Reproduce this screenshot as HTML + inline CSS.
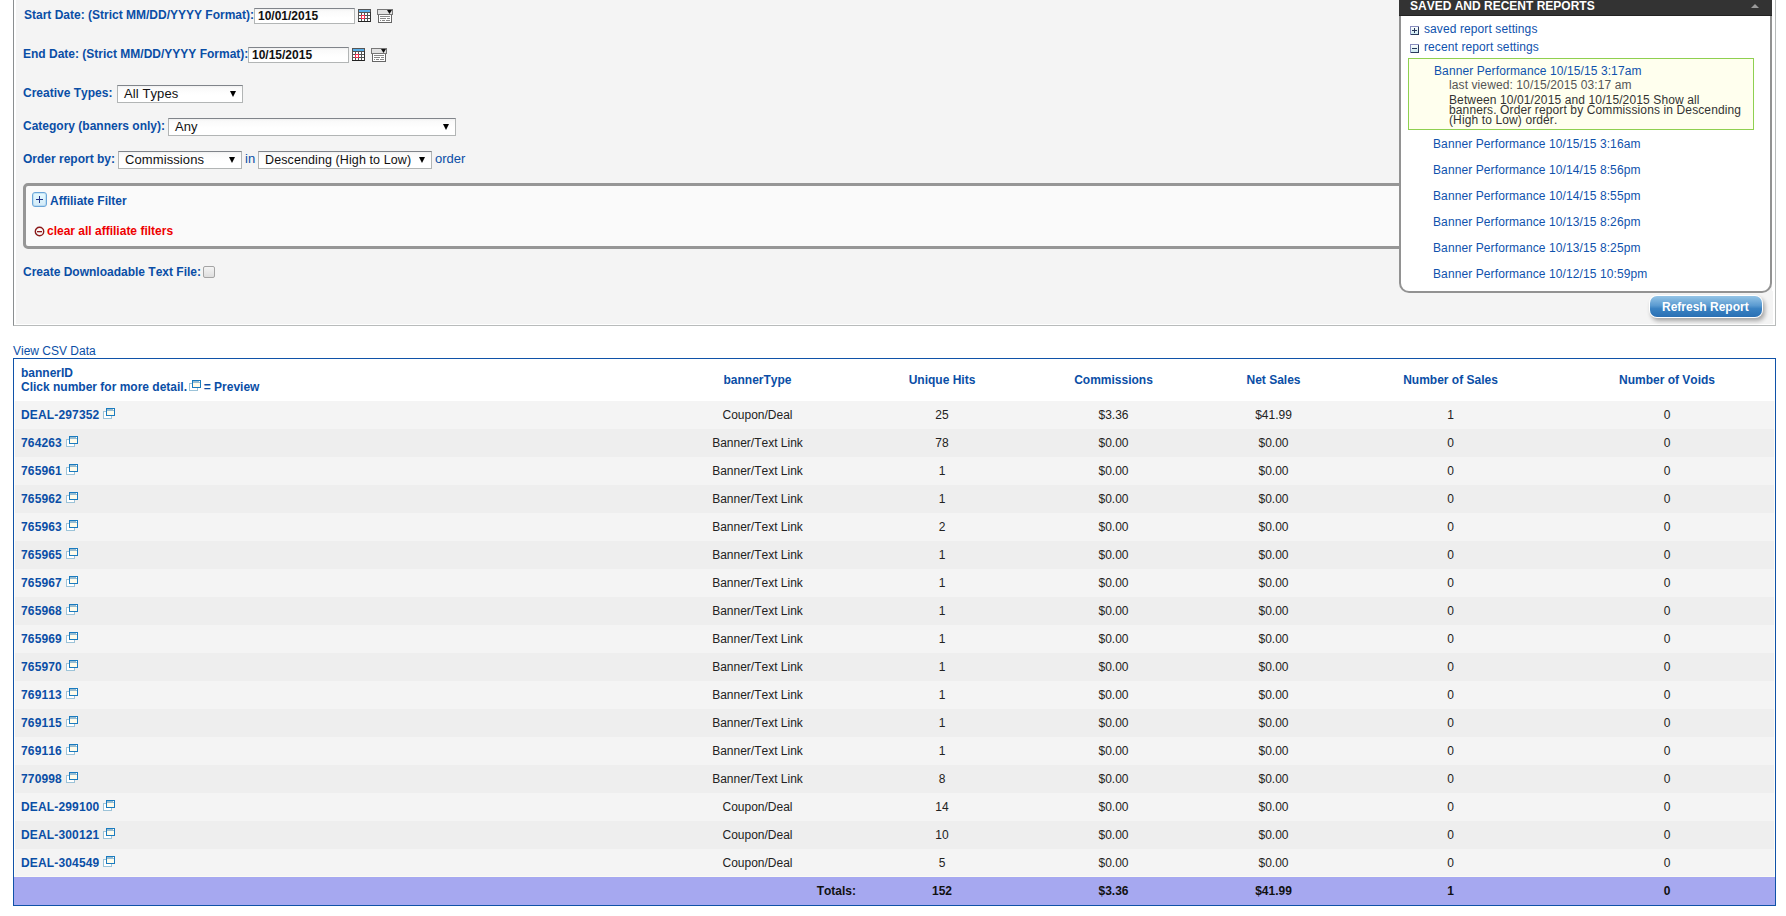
<!DOCTYPE html>
<html><head><meta charset="utf-8">
<style>
*{margin:0;padding:0;box-sizing:border-box}
html,body{width:1786px;height:916px;overflow:hidden;background:#fff}
body{position:relative;font-family:"Liberation Sans",sans-serif;font-size:12px;color:#222;font-kerning:none;font-feature-settings:"kern" 0}
.a{position:absolute;white-space:nowrap;line-height:14px}
.lbl{font-weight:bold;color:#0a4ea6}
#form{position:absolute;left:13px;top:-20px;width:1763px;height:346px;background:#f4f4f4;border:1px solid #b8bbbb;border-left-color:#8b8f91;box-shadow:inset 2px 0 0 #fff,inset -2px 0 0 #fff,inset 0 -1px 0 #fff}
.inp{position:absolute;background:linear-gradient(#f0f0f0,#fafafa 2px,#fff 9px);border:1px solid #b2b5b5;border-top-color:#80848a;font-size:12px;font-weight:bold;color:#111;line-height:14px;padding-left:3px}
.sel{position:absolute;letter-spacing:0.1px;background:linear-gradient(#f0f0f0,#fafafa 2px,#fff 9px);border:1px solid #b2b5b5;border-top-color:#80848a;font-size:13px;color:#111;line-height:16px;padding-left:6px}
.sel .arr{position:absolute;right:6px;top:5px;width:0;height:0;border-left:3px solid transparent;border-right:3px solid transparent;border-top:6px solid #000}
#aff{position:absolute;left:23px;top:183px;width:1420px;height:66px;border:3px solid #969696;border-radius:5px;background:#fafafa}
#panel{position:absolute;left:1399px;top:-20px;width:373px;height:313px;background:#fff;border:2px solid #929292;border-top:0;border-radius:0 0 10px 10px}
#phead{position:absolute;left:1399px;top:0;width:373px;height:16px;background:#333;border-bottom:1px solid #222}
.plink{color:#0f52ad;letter-spacing:0.1px}
table{position:absolute;left:13px;top:358px;width:1763px;border:1px solid #1052a8;border-collapse:separate;border-spacing:0;table-layout:fixed}
td,th{height:28px;padding:0;text-align:center;font-size:12px;line-height:14px;white-space:nowrap}
th{height:42px;color:#0a4ea6;font-weight:bold;background:#fff}
tr.o td{background:#f4f4f4}
tr.e td{background:#eeeeee}
td.id{text-align:left;padding-left:7px;font-weight:bold;color:#0a4ea6;letter-spacing:0.15px}
tr.tot td{background:#a6a8f0;font-weight:bold;color:#111}
.pv{display:inline-block;vertical-align:top;margin-left:4px}
#btn{position:absolute;left:1649px;top:295px;width:114px;height:23px;border-radius:8px;background:#fff;box-shadow:2px 3px 4px rgba(0,0,0,.32)}
#btn div{position:absolute;left:1px;top:1px;width:112px;height:21px;border-radius:7px;background:linear-gradient(#94c4e6,#5b9bd1 45%,#3a82c2 60%,#2a70b4);color:#fff;font-weight:bold;line-height:22px;padding-left:12px;white-space:nowrap}
</style></head><body>
<svg width="0" height="0" style="position:absolute"><defs><linearGradient id="pmg" x1="0" y1="0" x2="0" y2="1"><stop offset="0" stop-color="#ffffff"/><stop offset="1" stop-color="#c8e6ee"/></linearGradient></defs></svg>
<div id="form"></div>

<div class="a lbl" style="left:24px;top:8px">Start Date: (Strict MM/DD/YYYY Format):</div>
<div class="inp" style="left:254px;top:8px;width:101px;height:16px">10/01/2015</div>
<div class="a lbl" style="left:23px;top:47px">End Date: (Strict MM/DD/YYYY Format):</div>
<div class="inp" style="left:248px;top:47px;width:101px;height:16px">10/15/2015</div>

<svg style="position:absolute;left:358px;top:9px" width="13" height="13" shape-rendering="crispEdges"><rect x="0" y="0" width="13" height="13" fill="#555"/><rect x="1" y="1" width="11" height="2" fill="#5aaee8"/><g fill="#fff"><rect x="1" y="4" width="2" height="2"/><rect x="1" y="7" width="2" height="2"/><rect x="1" y="10" width="2" height="2"/><rect x="4" y="4" width="2" height="2"/><rect x="4" y="7" width="2" height="2"/><rect x="4" y="10" width="2" height="2"/><rect x="7" y="4" width="2" height="2"/><rect x="7" y="7" width="2" height="2"/><rect x="7" y="10" width="2" height="2"/><rect x="10" y="4" width="2" height="2"/><rect x="10" y="7" width="2" height="2"/><rect x="10" y="10" width="2" height="2"/></g><rect x="3" y="6" width="4" height="1" fill="#f03050"/><rect x="3" y="9" width="4" height="1" fill="#f03050"/><rect x="3" y="6" width="1" height="4" fill="#f03050"/><rect x="6" y="6" width="1" height="4" fill="#f03050"/><rect x="0" y="12" width="13" height="1" fill="#222"/><rect x="12" y="3" width="1" height="10" fill="#333"/></svg>
<svg style="position:absolute;left:377px;top:9px" width="16" height="14" shape-rendering="crispEdges"><rect x="0" y="0" width="16" height="6" fill="#777"/><rect x="1" y="1" width="14" height="4" fill="#e2e2e2"/><polygon points="10,1 15,1 12.5,5" fill="#111" shape-rendering="auto"/><rect x="1" y="6" width="14" height="8" fill="#666"/><rect x="2" y="6" width="12" height="7" fill="#fff"/><rect x="3" y="7" width="10" height="1" fill="#888"/><rect x="3" y="9" width="6" height="1" fill="#888"/><rect x="10" y="9" width="3" height="1" fill="#888"/><rect x="3" y="11" width="1" height="1" fill="#888"/><rect x="5" y="11" width="3" height="1" fill="#888"/><rect x="9" y="11" width="4" height="1" fill="#888"/></svg>
<svg style="position:absolute;left:352px;top:48px" width="13" height="13" shape-rendering="crispEdges"><rect x="0" y="0" width="13" height="13" fill="#555"/><rect x="1" y="1" width="11" height="2" fill="#5aaee8"/><g fill="#fff"><rect x="1" y="4" width="2" height="2"/><rect x="1" y="7" width="2" height="2"/><rect x="1" y="10" width="2" height="2"/><rect x="4" y="4" width="2" height="2"/><rect x="4" y="7" width="2" height="2"/><rect x="4" y="10" width="2" height="2"/><rect x="7" y="4" width="2" height="2"/><rect x="7" y="7" width="2" height="2"/><rect x="7" y="10" width="2" height="2"/><rect x="10" y="4" width="2" height="2"/><rect x="10" y="7" width="2" height="2"/><rect x="10" y="10" width="2" height="2"/></g><rect x="3" y="6" width="4" height="1" fill="#f03050"/><rect x="3" y="9" width="4" height="1" fill="#f03050"/><rect x="3" y="6" width="1" height="4" fill="#f03050"/><rect x="6" y="6" width="1" height="4" fill="#f03050"/><rect x="0" y="12" width="13" height="1" fill="#222"/><rect x="12" y="3" width="1" height="10" fill="#333"/></svg>
<svg style="position:absolute;left:371px;top:48px" width="16" height="14" shape-rendering="crispEdges"><rect x="0" y="0" width="16" height="6" fill="#777"/><rect x="1" y="1" width="14" height="4" fill="#e2e2e2"/><polygon points="10,1 15,1 12.5,5" fill="#111" shape-rendering="auto"/><rect x="1" y="6" width="14" height="8" fill="#666"/><rect x="2" y="6" width="12" height="7" fill="#fff"/><rect x="3" y="7" width="10" height="1" fill="#888"/><rect x="3" y="9" width="6" height="1" fill="#888"/><rect x="10" y="9" width="3" height="1" fill="#888"/><rect x="3" y="11" width="1" height="1" fill="#888"/><rect x="5" y="11" width="3" height="1" fill="#888"/><rect x="9" y="11" width="4" height="1" fill="#888"/></svg>
<div class="a lbl" style="left:23px;top:86px">Creative Types:</div>
<div class="sel" style="left:117px;top:85px;width:126px;height:18px">All Types<span class="arr"></span></div>
<div class="a lbl" style="left:23px;top:119px">Category (banners only):</div>
<div class="sel" style="left:168px;top:118px;width:288px;height:18px">Any<span class="arr"></span></div>
<div class="a lbl" style="left:23px;top:152px">Order report by:</div>
<div class="sel" style="left:118px;top:151px;width:124px;height:18px">Commissions<span class="arr"></span></div>
<div class="a lbl" style="left:245px;top:152px;font-weight:normal;font-size:13px">in</div>
<div class="sel" style="left:258px;top:151px;width:174px;height:18px;font-size:12.5px">Descending (High to Low)<span class="arr"></span></div>
<div class="a lbl" style="left:435px;top:152px;font-weight:normal;font-size:13px">order</div>

<div id="aff"></div>
<div class="a lbl" style="left:50px;top:194px">Affiliate Filter</div>
<div class="a" style="left:47px;top:224px;font-weight:bold;color:#ee0000">clear all affiliate filters</div>
<div style="position:absolute;left:32px;top:192px;width:15px;height:15px;border:1px solid #6aa6d9;border-radius:3px;background:linear-gradient(#e6faff,#d2eaf8);box-shadow:inset 0 0 0 1px rgba(106,166,217,.25)"></div>
<svg style="position:absolute;left:32px;top:192px" width="15" height="15" shape-rendering="crispEdges"><rect x="4" y="7" width="7" height="1" fill="#223388"/><rect x="7" y="4" width="1" height="7" fill="#223388"/></svg>
<svg style="position:absolute;left:34px;top:226px" width="11" height="11"><circle cx="5.5" cy="5.5" r="4.2" fill="none" stroke="#8a1a1a" stroke-width="1.4"/><rect x="3" y="5" width="5" height="1.3" fill="#8a1a1a"/></svg>
<div style="position:absolute;left:203px;top:266px;width:12px;height:12px;border:1px solid #a4a4a4;border-radius:2px;background:linear-gradient(#f4f4f4,#dedede)"></div>
<div class="a lbl" style="left:23px;top:265px">Create Downloadable Text File:</div>

<div id="panel"></div>
<div id="phead"></div>
<div class="a" style="left:1410px;top:-1px;font-weight:bold;color:#fff">SAVED AND RECENT REPORTS</div>
<svg style="position:absolute;left:1751px;top:4px" width="8" height="4"><polygon points="0,4 4,0 8,4" fill="#9a9a9a"/></svg>
<svg class="pm" style="position:absolute;left:1410px;top:26px" width="9" height="9" shape-rendering="crispEdges"><rect x="0.5" y="0.5" width="8" height="8" rx="1" fill="url(#pmg)" stroke="#8a8fc0"/><path d="M8.5 1v7.5H1" fill="none" stroke="#2a3a5c"/><rect x="2" y="4" width="5" height="1" fill="#26365a"/><rect x="4" y="2" width="1" height="5" fill="#26365a"/></svg>
<div class="a plink" style="left:1424px;top:22px">saved report settings</div>
<svg class="pm" style="position:absolute;left:1410px;top:44px" width="9" height="9" shape-rendering="crispEdges"><rect x="0.5" y="0.5" width="8" height="8" rx="1" fill="url(#pmg)" stroke="#8a8fc0"/><path d="M8.5 1v7.5H1" fill="none" stroke="#2a3a5c"/><rect x="2" y="4" width="5" height="1" fill="#26365a"/></svg>
<div class="a plink" style="left:1424px;top:40px">recent report settings</div>
<div style="position:absolute;left:1408px;top:58px;width:346px;height:72px;background:#ffffee;border:1px solid #8fd050"></div>
<div class="a plink" style="left:1434px;top:64px">Banner Performance 10/15/15 3:17am</div>
<div class="a" style="left:1449px;top:78px;color:#555;letter-spacing:0.1px">last viewed: 10/15/2015 03:17 am</div>
<div class="a" style="left:1449px;top:95px;color:#333;line-height:10px;letter-spacing:0.12px">Between 10/01/2015 and 10/15/2015 Show all<br>banners. Order report by Commissions in Descending<br>(High to Low) order.</div>
<div class="a plink" style="left:1433px;top:137px">Banner Performance 10/15/15 3:16am</div>
<div class="a plink" style="left:1433px;top:163px">Banner Performance 10/14/15 8:56pm</div>
<div class="a plink" style="left:1433px;top:189px">Banner Performance 10/14/15 8:55pm</div>
<div class="a plink" style="left:1433px;top:215px">Banner Performance 10/13/15 8:26pm</div>
<div class="a plink" style="left:1433px;top:241px">Banner Performance 10/13/15 8:25pm</div>
<div class="a plink" style="left:1433px;top:267px">Banner Performance 10/12/15 10:59pm</div>
<div style="position:absolute;left:1772px;top:0;width:3px;height:291px;background:#fff"></div>
<div id="btn"><div>Refresh Report</div></div>

<div class="a lbl" style="left:13px;top:344px;font-weight:normal">View CSV Data</div>

<table>
<colgroup><col style="width:639px"><col style="width:209px"><col style="width:160px"><col style="width:183px"><col style="width:137px"><col style="width:217px"><col style="width:216px"></colgroup>
<tr><th style="text-align:left;padding-left:7px">bannerID<br>Click number for more detail. <span class="pv" style="margin:0 -1px 0 -1px"><svg width="12" height="11" shape-rendering="crispEdges"><rect x="0.5" y="3.5" width="8" height="7" fill="#fff" stroke="#9cc3d8"/><rect x="3.5" y="0.5" width="8" height="7" fill="#fffbea" stroke="#1a7bbf"/><rect x="4" y="1" width="7" height="2" fill="#98bdd2"/><rect x="10" y="1" width="1" height="1" fill="#fff"/></svg></span> = Preview</th><th>bannerType</th><th>Unique Hits</th><th>Commissions</th><th>Net Sales</th><th>Number of Sales</th><th>Number of Voids</th></tr>
<tr class="o"><td class="id">DEAL-297352<span class="pv"><svg width="12" height="11" shape-rendering="crispEdges"><rect x="0.5" y="3.5" width="8" height="7" fill="#fff" stroke="#9cc3d8"/><rect x="3.5" y="0.5" width="8" height="7" fill="#fffbea" stroke="#1a7bbf"/><rect x="4" y="1" width="7" height="2" fill="#98bdd2"/><rect x="10" y="1" width="1" height="1" fill="#fff"/></svg></span></td><td>Coupon/Deal</td><td>25</td><td>$3.36</td><td>$41.99</td><td>1</td><td>0</td></tr>
<tr class="e"><td class="id">764263<span class="pv"><svg width="12" height="11" shape-rendering="crispEdges"><rect x="0.5" y="3.5" width="8" height="7" fill="#fff" stroke="#9cc3d8"/><rect x="3.5" y="0.5" width="8" height="7" fill="#fffbea" stroke="#1a7bbf"/><rect x="4" y="1" width="7" height="2" fill="#98bdd2"/><rect x="10" y="1" width="1" height="1" fill="#fff"/></svg></span></td><td>Banner/Text Link</td><td>78</td><td>$0.00</td><td>$0.00</td><td>0</td><td>0</td></tr>
<tr class="o"><td class="id">765961<span class="pv"><svg width="12" height="11" shape-rendering="crispEdges"><rect x="0.5" y="3.5" width="8" height="7" fill="#fff" stroke="#9cc3d8"/><rect x="3.5" y="0.5" width="8" height="7" fill="#fffbea" stroke="#1a7bbf"/><rect x="4" y="1" width="7" height="2" fill="#98bdd2"/><rect x="10" y="1" width="1" height="1" fill="#fff"/></svg></span></td><td>Banner/Text Link</td><td>1</td><td>$0.00</td><td>$0.00</td><td>0</td><td>0</td></tr>
<tr class="e"><td class="id">765962<span class="pv"><svg width="12" height="11" shape-rendering="crispEdges"><rect x="0.5" y="3.5" width="8" height="7" fill="#fff" stroke="#9cc3d8"/><rect x="3.5" y="0.5" width="8" height="7" fill="#fffbea" stroke="#1a7bbf"/><rect x="4" y="1" width="7" height="2" fill="#98bdd2"/><rect x="10" y="1" width="1" height="1" fill="#fff"/></svg></span></td><td>Banner/Text Link</td><td>1</td><td>$0.00</td><td>$0.00</td><td>0</td><td>0</td></tr>
<tr class="o"><td class="id">765963<span class="pv"><svg width="12" height="11" shape-rendering="crispEdges"><rect x="0.5" y="3.5" width="8" height="7" fill="#fff" stroke="#9cc3d8"/><rect x="3.5" y="0.5" width="8" height="7" fill="#fffbea" stroke="#1a7bbf"/><rect x="4" y="1" width="7" height="2" fill="#98bdd2"/><rect x="10" y="1" width="1" height="1" fill="#fff"/></svg></span></td><td>Banner/Text Link</td><td>2</td><td>$0.00</td><td>$0.00</td><td>0</td><td>0</td></tr>
<tr class="e"><td class="id">765965<span class="pv"><svg width="12" height="11" shape-rendering="crispEdges"><rect x="0.5" y="3.5" width="8" height="7" fill="#fff" stroke="#9cc3d8"/><rect x="3.5" y="0.5" width="8" height="7" fill="#fffbea" stroke="#1a7bbf"/><rect x="4" y="1" width="7" height="2" fill="#98bdd2"/><rect x="10" y="1" width="1" height="1" fill="#fff"/></svg></span></td><td>Banner/Text Link</td><td>1</td><td>$0.00</td><td>$0.00</td><td>0</td><td>0</td></tr>
<tr class="o"><td class="id">765967<span class="pv"><svg width="12" height="11" shape-rendering="crispEdges"><rect x="0.5" y="3.5" width="8" height="7" fill="#fff" stroke="#9cc3d8"/><rect x="3.5" y="0.5" width="8" height="7" fill="#fffbea" stroke="#1a7bbf"/><rect x="4" y="1" width="7" height="2" fill="#98bdd2"/><rect x="10" y="1" width="1" height="1" fill="#fff"/></svg></span></td><td>Banner/Text Link</td><td>1</td><td>$0.00</td><td>$0.00</td><td>0</td><td>0</td></tr>
<tr class="e"><td class="id">765968<span class="pv"><svg width="12" height="11" shape-rendering="crispEdges"><rect x="0.5" y="3.5" width="8" height="7" fill="#fff" stroke="#9cc3d8"/><rect x="3.5" y="0.5" width="8" height="7" fill="#fffbea" stroke="#1a7bbf"/><rect x="4" y="1" width="7" height="2" fill="#98bdd2"/><rect x="10" y="1" width="1" height="1" fill="#fff"/></svg></span></td><td>Banner/Text Link</td><td>1</td><td>$0.00</td><td>$0.00</td><td>0</td><td>0</td></tr>
<tr class="o"><td class="id">765969<span class="pv"><svg width="12" height="11" shape-rendering="crispEdges"><rect x="0.5" y="3.5" width="8" height="7" fill="#fff" stroke="#9cc3d8"/><rect x="3.5" y="0.5" width="8" height="7" fill="#fffbea" stroke="#1a7bbf"/><rect x="4" y="1" width="7" height="2" fill="#98bdd2"/><rect x="10" y="1" width="1" height="1" fill="#fff"/></svg></span></td><td>Banner/Text Link</td><td>1</td><td>$0.00</td><td>$0.00</td><td>0</td><td>0</td></tr>
<tr class="e"><td class="id">765970<span class="pv"><svg width="12" height="11" shape-rendering="crispEdges"><rect x="0.5" y="3.5" width="8" height="7" fill="#fff" stroke="#9cc3d8"/><rect x="3.5" y="0.5" width="8" height="7" fill="#fffbea" stroke="#1a7bbf"/><rect x="4" y="1" width="7" height="2" fill="#98bdd2"/><rect x="10" y="1" width="1" height="1" fill="#fff"/></svg></span></td><td>Banner/Text Link</td><td>1</td><td>$0.00</td><td>$0.00</td><td>0</td><td>0</td></tr>
<tr class="o"><td class="id">769113<span class="pv"><svg width="12" height="11" shape-rendering="crispEdges"><rect x="0.5" y="3.5" width="8" height="7" fill="#fff" stroke="#9cc3d8"/><rect x="3.5" y="0.5" width="8" height="7" fill="#fffbea" stroke="#1a7bbf"/><rect x="4" y="1" width="7" height="2" fill="#98bdd2"/><rect x="10" y="1" width="1" height="1" fill="#fff"/></svg></span></td><td>Banner/Text Link</td><td>1</td><td>$0.00</td><td>$0.00</td><td>0</td><td>0</td></tr>
<tr class="e"><td class="id">769115<span class="pv"><svg width="12" height="11" shape-rendering="crispEdges"><rect x="0.5" y="3.5" width="8" height="7" fill="#fff" stroke="#9cc3d8"/><rect x="3.5" y="0.5" width="8" height="7" fill="#fffbea" stroke="#1a7bbf"/><rect x="4" y="1" width="7" height="2" fill="#98bdd2"/><rect x="10" y="1" width="1" height="1" fill="#fff"/></svg></span></td><td>Banner/Text Link</td><td>1</td><td>$0.00</td><td>$0.00</td><td>0</td><td>0</td></tr>
<tr class="o"><td class="id">769116<span class="pv"><svg width="12" height="11" shape-rendering="crispEdges"><rect x="0.5" y="3.5" width="8" height="7" fill="#fff" stroke="#9cc3d8"/><rect x="3.5" y="0.5" width="8" height="7" fill="#fffbea" stroke="#1a7bbf"/><rect x="4" y="1" width="7" height="2" fill="#98bdd2"/><rect x="10" y="1" width="1" height="1" fill="#fff"/></svg></span></td><td>Banner/Text Link</td><td>1</td><td>$0.00</td><td>$0.00</td><td>0</td><td>0</td></tr>
<tr class="e"><td class="id">770998<span class="pv"><svg width="12" height="11" shape-rendering="crispEdges"><rect x="0.5" y="3.5" width="8" height="7" fill="#fff" stroke="#9cc3d8"/><rect x="3.5" y="0.5" width="8" height="7" fill="#fffbea" stroke="#1a7bbf"/><rect x="4" y="1" width="7" height="2" fill="#98bdd2"/><rect x="10" y="1" width="1" height="1" fill="#fff"/></svg></span></td><td>Banner/Text Link</td><td>8</td><td>$0.00</td><td>$0.00</td><td>0</td><td>0</td></tr>
<tr class="o"><td class="id">DEAL-299100<span class="pv"><svg width="12" height="11" shape-rendering="crispEdges"><rect x="0.5" y="3.5" width="8" height="7" fill="#fff" stroke="#9cc3d8"/><rect x="3.5" y="0.5" width="8" height="7" fill="#fffbea" stroke="#1a7bbf"/><rect x="4" y="1" width="7" height="2" fill="#98bdd2"/><rect x="10" y="1" width="1" height="1" fill="#fff"/></svg></span></td><td>Coupon/Deal</td><td>14</td><td>$0.00</td><td>$0.00</td><td>0</td><td>0</td></tr>
<tr class="e"><td class="id">DEAL-300121<span class="pv"><svg width="12" height="11" shape-rendering="crispEdges"><rect x="0.5" y="3.5" width="8" height="7" fill="#fff" stroke="#9cc3d8"/><rect x="3.5" y="0.5" width="8" height="7" fill="#fffbea" stroke="#1a7bbf"/><rect x="4" y="1" width="7" height="2" fill="#98bdd2"/><rect x="10" y="1" width="1" height="1" fill="#fff"/></svg></span></td><td>Coupon/Deal</td><td>10</td><td>$0.00</td><td>$0.00</td><td>0</td><td>0</td></tr>
<tr class="o"><td class="id">DEAL-304549<span class="pv"><svg width="12" height="11" shape-rendering="crispEdges"><rect x="0.5" y="3.5" width="8" height="7" fill="#fff" stroke="#9cc3d8"/><rect x="3.5" y="0.5" width="8" height="7" fill="#fffbea" stroke="#1a7bbf"/><rect x="4" y="1" width="7" height="2" fill="#98bdd2"/><rect x="10" y="1" width="1" height="1" fill="#fff"/></svg></span></td><td>Coupon/Deal</td><td>5</td><td>$0.00</td><td>$0.00</td><td>0</td><td>0</td></tr>
<tr class="tot"><td></td><td style="text-align:right;padding-right:6px">Totals:</td><td>152</td><td>$3.36</td><td>$41.99</td><td>1</td><td>0</td></tr>
</table>
<div style="position:absolute;left:14px;top:401px;width:1px;height:476px;background:#fdfdf8"></div><div style="position:absolute;left:1774px;top:401px;width:1px;height:476px;background:#fdfdf8"></div><div style="position:absolute;left:14px;top:876px;width:1760px;height:1px;background:#fafaf4"></div>
</body></html>
